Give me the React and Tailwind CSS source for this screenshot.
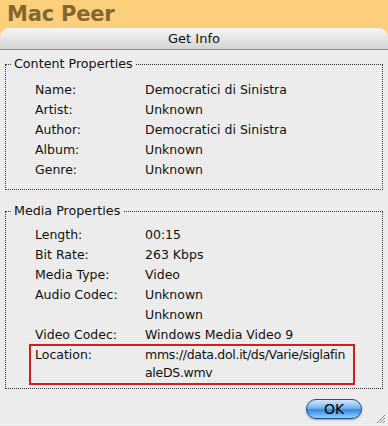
const contentRows = [
  ['Name:', 'Democratici di Sinistra'],
  ['Artist:', 'Unknown'],
  ['Author:', 'Democratici di Sinistra'],
  ['Album:', 'Unknown'],
  ['Genre:', 'Unknown'],
]

const mediaRows = [
  ['Length:', '00:15'],
  ['Bit Rate:', '263 Kbps'],
  ['Media Type:', 'Video'],
  ['Audio Codec:', 'Unknown'],
  ['', 'Unknown'],
  ['Video Codec:', 'Windows Media Video 9'],
]

function Row({ label, value }) {
  return (
    <div className="flex h-[20px] items-center">
      <div className="w-[110px] shrink-0">{label}</div>
      <div>{value}</div>
    </div>
  )
}

function GroupBox({ title, children, className }) {
  return (
    <fieldset className={'mx-[5px] border border-dotted border-[#333] pb-[2px] ' + (className || '')}>
      <legend className="ml-[5px] px-[3px] text-[12.7px] leading-[16px]">{title}</legend>
      {children}
    </fieldset>
  )
}

export default function App() {
  return (
    <div className="w-[388px] h-[426px] overflow-hidden bg-[#fccf7c] font-['DejaVu_Sans',sans-serif] text-[#111]">
      <div className="h-[28px] pl-[7px] pt-[1px] text-[21px] font-bold leading-[26px] tracking-[-0.2px] text-[#82672f]">
        Mac Peer
      </div>
      <div className="flex h-[22px] items-center justify-center rounded-t-[9px] border-b border-[#8a8a8a] bg-[linear-gradient(to_bottom,#f6f6f6,#d4d4d4)] text-[13px]">
        Get Info
      </div>
      <div className="relative h-[376px] bg-[repeating-linear-gradient(to_bottom,#f0f0f0_0px,#f0f0f0_1px,#e8e8e8_1px,#e8e8e8_2px)] pt-[6px] text-[12.5px]">
        <GroupBox title="Content Properties">
          <div className="pl-[29px] pt-[8px] pb-[7px]">
            {contentRows.map(([l, v]) => (
              <Row key={l} label={l} value={v} />
            ))}
          </div>
        </GroupBox>
        <GroupBox title="Media Properties" className="mt-[13px]">
          <div className="pl-[29px] pt-[6px]">
            {mediaRows.map(([l, v], i) => (
              <Row key={i} label={l} value={v} />
            ))}
          </div>
          <div className="ml-[23px] mr-[27px] mt-[-1px] mb-[1px] flex border-2 border-[#d01e1e] pl-[4px] pb-[1px] leading-[18px]">
            <div className="w-[110px] shrink-0">Location:</div>
            <div className="whitespace-nowrap tracking-[-0.3px]">
              mms://data.dol.it/ds/Varie/siglafin
              <br />
              aleDS.wmv
            </div>
          </div>
        </GroupBox>
        <div className="flex justify-end pr-[26px] pt-[10px]">
          <button className="h-[20px] w-[56px] rounded-full border border-[#1d4f94] bg-[linear-gradient(to_bottom,#d2e8fc_0%,#74b4f2_45%,#3a84dc_55%,#92d2ff_100%)] text-[14px] leading-[18px] text-black shadow-[0_1px_2px_rgba(0,0,0,0.35)]">
            OK
          </button>
        </div>
        <svg className="absolute bottom-[2px] right-[2px]" width="12" height="12" viewBox="0 0 12 12">
          <path d="M11 3 L3 11 M11 6 L6 11 M11 9 L9 11" stroke="#888" strokeWidth="1" />
        </svg>
      </div>
    </div>
  )
}
